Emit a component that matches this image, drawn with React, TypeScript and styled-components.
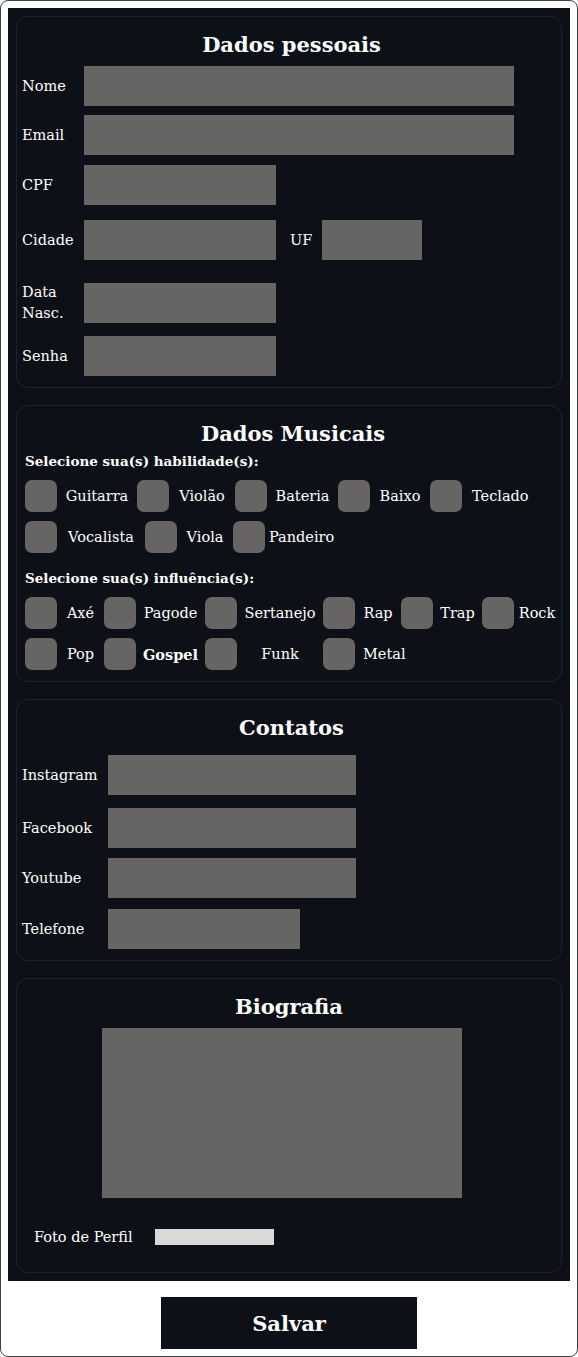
import React from "react";
import styled, { createGlobalStyle } from "styled-components";

const Global = createGlobalStyle`
  html, body { margin: 0; padding: 0; background: #ffffff; }
  body { font-family: "DejaVu Serif", "Liberation Serif", serif; color: #ffffff; }
  * { box-sizing: border-box; }
`;

const Frame = styled.div`
  width: 578px;
  min-height: 1357px;
  border: 1px solid #3b434c;
  border-radius: 8px;
  padding: 7px 7px 7px 7px;
  display: flex;
  flex-direction: column;
  align-items: center;
`;

const Form = styled.form`
  width: 562px;
  background: #0d1117;
  padding: 8px;
  display: flex;
  flex-direction: column;
  gap: 17px;
`;

const Card = styled.section<{ $pb: number; $pl: number }>`
  border: 1px solid #1f242b;
  border-radius: 12px;
  padding: 14px 0 ${(p) => p.$pb}px ${(p) => p.$pl}px;
  display: flex;
  flex-direction: column;
`;

const Title = styled.h2`
  margin: 0;
  font-size: 21px;
  line-height: 28px;
  font-weight: 700;
  text-align: center;
  color: #ffffff;
`;

const Row = styled.div<{ $mt: number }>`
  display: flex;
  align-items: center;
  margin-top: ${(p) => p.$mt}px;
`;

const Label = styled.label<{ $w: number }>`
  width: ${(p) => p.$w}px;
  flex: none;
  font-size: 14.5px;
  line-height: 21px;
  color: #ffffff;
`;

const Input = styled.input<{ $w: number }>`
  width: ${(p) => p.$w}px;
  height: 40px;
  border: none;
  background: #666563;
  flex: none;
`;

const SideLabel = styled.label`
  width: 32px;
  margin-left: 14px;
  font-size: 14.5px;
  color: #ffffff;
`;

const SubHeading = styled.h3<{ $mt: number }>`
  margin: ${(p) => p.$mt}px 0 0 0;
  font-size: 13.5px;
  line-height: 18px;
  font-weight: 700;
  color: #ffffff;
`;

const CheckRow = styled.div<{ $mt: number }>`
  display: flex;
  align-items: center;
  margin-top: ${(p) => p.$mt}px;
`;

const Box = styled.input.attrs({ type: "checkbox" })`
  appearance: none;
  -webkit-appearance: none;
  margin: 0;
  width: 32px;
  height: 32px;
  border-radius: 7px;
  background: #666563;
  flex: none;
`;

const CheckText = styled.span<{ $w?: number; $pl?: number }>`
  ${(p) => (p.$w ? `width: ${p.$w}px; text-align: center;` : `padding-left: ${p.$pl ?? 10}px;`)}
  flex: none;
  font-size: 14.5px;
  white-space: nowrap;
  color: #ffffff;
`;

const InfluenceGrid = styled.div`
  display: grid;
  grid-template-columns: 32px 47px 32px 69px 32px 86px 32px 46px 32px 49px 32px 46px;
  row-gap: 9px;
  align-items: center;
  margin-top: 10px;
`;

const GridText = styled.span<{ $bold?: boolean; $left?: boolean }>`
  font-size: 14.5px;
  font-weight: ${(p) => (p.$bold ? 700 : 400)};
  text-align: ${(p) => (p.$left ? "left" : "center")};
  padding-left: ${(p) => (p.$left ? "8px" : "0")};
  white-space: nowrap;
  color: #ffffff;
`;

const BioArea = styled.textarea`
  margin: 7px 0 0 85px;
  width: 360px;
  height: 170px;
  border: none;
  background: #666563;
  resize: none;
`;

const FileRow = styled.div`
  display: flex;
  align-items: center;
  margin-top: 29px;
  padding-left: 17px;
  height: 20px;
`;

const FileLabel = styled.label`
  font-size: 14.5px;
  color: #ffffff;
  margin-right: 22px;
`;

const FileBox = styled.span`
  display: block;
  width: 119px;
  height: 16px;
  background: #d9d9d9;
`;

const SaveButton = styled.button`
  margin-top: 16px;
  width: 256px;
  height: 52px;
  border: none;
  background: #0d1117;
  color: #ffffff;
  font-family: "DejaVu Serif", "Liberation Serif", serif;
  font-size: 21px;
  font-weight: 700;
`;

const skills1 = [
  { t: "Guitarra", w: 80 },
  { t: "Violão", w: 66 },
  { t: "Bateria", w: 71 },
  { t: "Baixo", w: 60 },
  { t: "Teclado" },
];
const skills2 = [
  { t: "Vocalista", w: 88 },
  { t: "Viola", w: 56 },
  { t: "Pandeiro", pl: 4 },
];

const influences = [
  "Axé", "Pagode", "Sertanejo", "Rap", "Trap", "Rock",
  "Pop", "Gospel", "Funk", "Metal",
];

export default function App() {
  return (
    <>
      <Global />
      <Frame>
        <Form onSubmit={(e) => e.preventDefault()}>
          <Card $pb={11} $pl={5}>
            <Title>Dados pessoais</Title>
            <Row $mt={7}>
              <Label $w={62}>Nome</Label>
              <Input $w={430} />
            </Row>
            <Row $mt={9}>
              <Label $w={62}>Email</Label>
              <Input $w={430} />
            </Row>
            <Row $mt={10}>
              <Label $w={62}>CPF</Label>
              <Input $w={192} />
            </Row>
            <Row $mt={15}>
              <Label $w={62}>Cidade</Label>
              <Input $w={192} />
              <SideLabel>UF</SideLabel>
              <Input $w={100} />
            </Row>
            <Row $mt={22}>
              <Label $w={62}>Data Nasc.</Label>
              <Input $w={192} />
            </Row>
            <Row $mt={12}>
              <Label $w={62}>Senha</Label>
              <Input $w={192} type="password" />
            </Row>
          </Card>

          <Card $pb={11} $pl={8}>
            <Title>Dados Musicais</Title>
            <SubHeading $mt={4}>Selecione sua(s) habilidade(s):</SubHeading>
            <CheckRow $mt={10}>
              {skills1.map((s) => (
                <React.Fragment key={s.t}>
                  <Box />
                  <CheckText $w={s.w}>{s.t}</CheckText>
                </React.Fragment>
              ))}
            </CheckRow>
            <CheckRow $mt={9}>
              {skills2.map((s) => (
                <React.Fragment key={s.t}>
                  <Box />
                  <CheckText $w={s.w} $pl={s.pl}>{s.t}</CheckText>
                </React.Fragment>
              ))}
            </CheckRow>
            <SubHeading $mt={16}>Selecione sua(s) influência(s):</SubHeading>
            <InfluenceGrid>
              {influences.map((t) => (
                <React.Fragment key={t}>
                  <Box />
                  <GridText $bold={t === "Gospel"} $left={t === "Metal"}>{t}</GridText>
                </React.Fragment>
              ))}
            </InfluenceGrid>
          </Card>

          <Card $pb={11} $pl={5}>
            <Title>Contatos</Title>
            <Row $mt={13}>
              <Label $w={86}>Instagram</Label>
              <Input $w={248} />
            </Row>
            <Row $mt={13}>
              <Label $w={86}>Facebook</Label>
              <Input $w={248} />
            </Row>
            <Row $mt={10}>
              <Label $w={86}>Youtube</Label>
              <Input $w={248} />
            </Row>
            <Row $mt={11}>
              <Label $w={86}>Telefone</Label>
              <Input $w={192} />
            </Row>
          </Card>

          <Card $pb={25} $pl={0}>
            <Title>Biografia</Title>
            <BioArea />
            <FileRow>
              <FileLabel>Foto de Perfil</FileLabel>
              <FileBox />
            </FileRow>
          </Card>
        </Form>
        <SaveButton type="button">Salvar</SaveButton>
      </Frame>
    </>
  );
}
